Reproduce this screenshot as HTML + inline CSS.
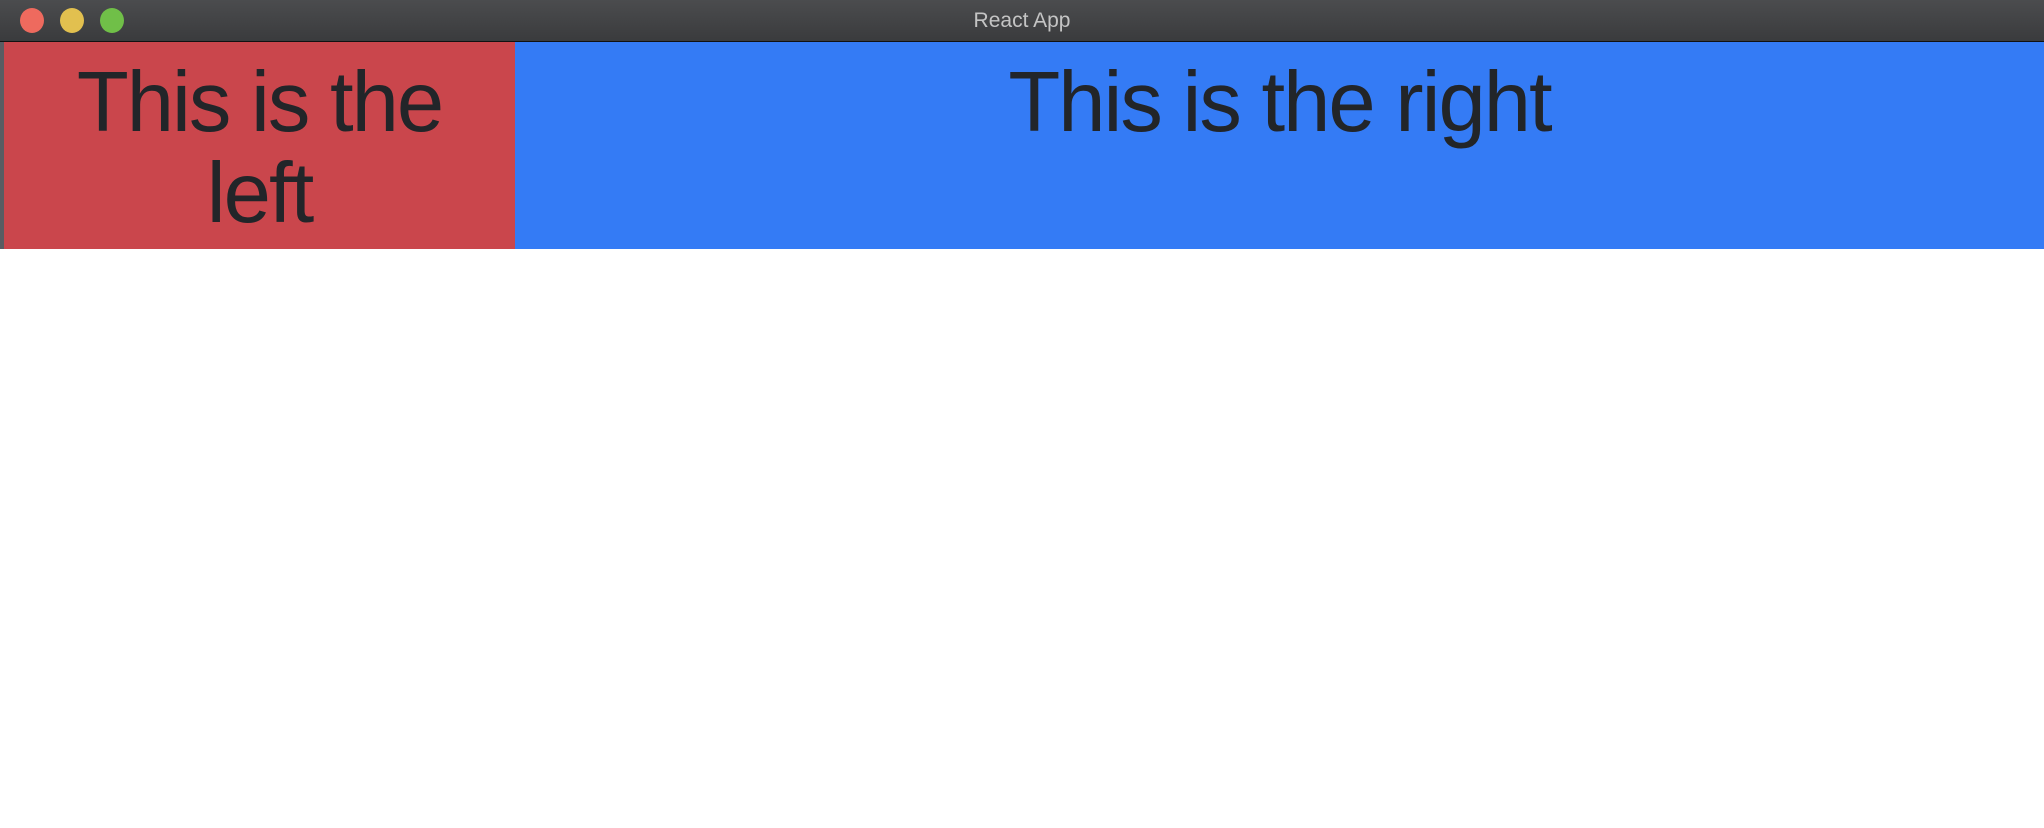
<!DOCTYPE html>
<html><head><style>
html,body{margin:0;padding:0;width:2044px;height:828px;overflow:hidden;background:#fff;font-family:"Liberation Sans",Arial,sans-serif;}
.tb{position:absolute;left:0;top:0;width:2044px;height:41px;background:linear-gradient(#4b4c4e,#3a3b3d);border-bottom:1px solid #111;}
.dot{position:absolute;top:8px;width:24px;height:25px;border-radius:50%;}
.title{position:absolute;left:0;right:0;top:9px;text-align:center;color:#c4c4c4;font-size:21px;}
.left{position:absolute;left:4px;top:42px;width:511px;height:207px;background:#ca464c;}
.right{position:absolute;left:515px;top:42px;width:1529px;height:207px;background:#347bf5;}
.edge{position:absolute;left:0;top:42px;width:4px;height:207px;background:#5a5c62;}
h1{margin:0;padding-top:15px;text-align:center;font-weight:normal;font-size:85px;letter-spacing:-2px;line-height:91px;color:#222529;}
</style></head><body>
<div class="tb">
<div class="dot" style="left:20px;background:#ee6a5e"></div>
<div class="dot" style="left:60px;background:#e2c04f"></div>
<div class="dot" style="left:100px;background:#70bf48"></div>
<div class="title">React App</div>
</div>
<div class="edge"></div>
<div class="left"><h1>This is the<br>left</h1></div>
<div class="right"><h1>This is the right</h1></div>
</body></html>
